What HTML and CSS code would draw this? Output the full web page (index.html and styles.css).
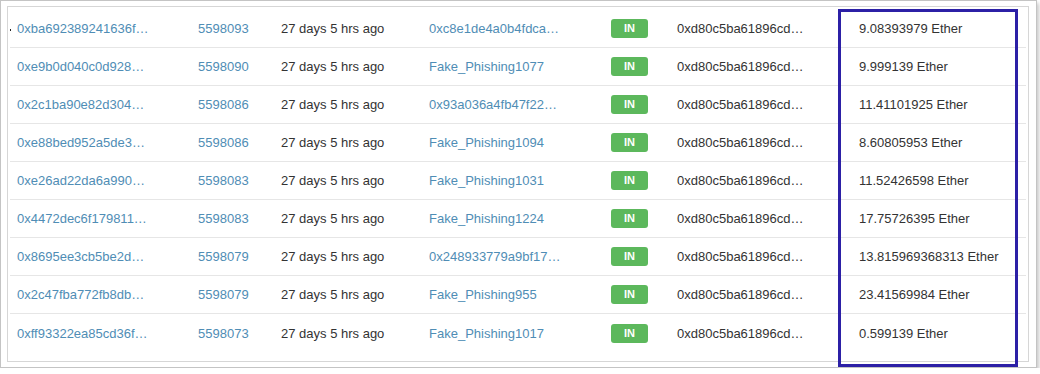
FILE: index.html
```html
<!DOCTYPE html>
<html>
<head>
<meta charset="utf-8">
<link rel="stylesheet" href="styles.css">
</head>
<body>
<div class="frame">
  <div class="panel">
    <div class="rows">
      <div class="row"><span class="link hash">0xba692389241636f…</span><span class="link">5598093</span><span>27 days 5 hrs ago</span><span class="link">0xc8e1de4a0b4fdca…</span><span><b class="badge">IN</b></span><span>0xd80c5ba61896cd…</span><span>9.08393979 Ether</span></div>
      <div class="row"><span class="link">0xe9b0d040c0d928…</span><span class="link">5598090</span><span>27 days 5 hrs ago</span><span class="link">Fake_Phishing1077</span><span><b class="badge">IN</b></span><span>0xd80c5ba61896cd…</span><span>9.999139 Ether</span></div>
      <div class="row"><span class="link">0x2c1ba90e82d304…</span><span class="link">5598086</span><span>27 days 5 hrs ago</span><span class="link">0x93a036a4fb47f22…</span><span><b class="badge">IN</b></span><span>0xd80c5ba61896cd…</span><span>11.41101925 Ether</span></div>
      <div class="row"><span class="link">0xe88bed952a5de3…</span><span class="link">5598086</span><span>27 days 5 hrs ago</span><span class="link">Fake_Phishing1094</span><span><b class="badge">IN</b></span><span>0xd80c5ba61896cd…</span><span>8.60805953 Ether</span></div>
      <div class="row"><span class="link">0xe26ad22da6a990…</span><span class="link">5598083</span><span>27 days 5 hrs ago</span><span class="link">Fake_Phishing1031</span><span><b class="badge">IN</b></span><span>0xd80c5ba61896cd…</span><span>11.52426598 Ether</span></div>
      <div class="row"><span class="link">0x4472dec6f179811…</span><span class="link">5598083</span><span>27 days 5 hrs ago</span><span class="link">Fake_Phishing1224</span><span><b class="badge">IN</b></span><span>0xd80c5ba61896cd…</span><span>17.75726395 Ether</span></div>
      <div class="row"><span class="link">0x8695ee3cb5be2d…</span><span class="link">5598079</span><span>27 days 5 hrs ago</span><span class="link">0x248933779a9bf17…</span><span><b class="badge">IN</b></span><span>0xd80c5ba61896cd…</span><span>13.815969368313 Ether</span></div>
      <div class="row"><span class="link">0x2c47fba772fb8db…</span><span class="link">5598079</span><span>27 days 5 hrs ago</span><span class="link">Fake_Phishing955</span><span><b class="badge">IN</b></span><span>0xd80c5ba61896cd…</span><span>23.41569984 Ether</span></div>
      <div class="row"><span class="link">0xff93322ea85cd36f…</span><span class="link">5598073</span><span>27 days 5 hrs ago</span><span class="link">Fake_Phishing1017</span><span><b class="badge">IN</b></span><span>0xd80c5ba61896cd…</span><span>0.599139 Ether</span></div>
    </div>
  </div>
  <div class="highlight"></div>
</div>
</body>
</html>
```
FILE: styles.css
```css
html, body {
  margin: 0;
  padding: 0;
  background: #ffffff;
}
body {
  font-family: "Liberation Sans", Arial, sans-serif;
  font-size: 13px;
  color: #333333;
}
.frame {
  position: relative;
  box-sizing: border-box;
  width: 1037px;
  height: 368px;
  border: 1px solid #c4c4c4;
  padding: 5px 8px 0 6px;
  box-shadow: 2px 3px 4px rgba(0, 0, 0, 0.22);
}
.panel {
  box-sizing: border-box;
  width: 1022px;
  height: 356px;
  border: 1px solid #d6d6d6;
  padding: 3px 2px 0 2px;
}
.rows {
  display: flex;
  flex-direction: column;
}
.row {
  display: grid;
  grid-template-columns: 181px 83px 148px 182px 66px 182px 1fr;
  height: 38px;
  box-sizing: border-box;
  border-bottom: 1px solid #e6e6e6;
  align-items: center;
}
.row:last-child {
  border-bottom: none;
}
.row > span {
  padding-left: 7px;
  white-space: nowrap;
  overflow: hidden;
}
.link {
  color: #4f8db5;
}
.hash {
  position: relative;
}
.hash::before {
  content: "";
  position: absolute;
  left: 0;
  top: 8px;
  width: 1px;
  height: 2px;
  background: #222;
}
.badge {
  display: inline-block;
  width: 37px;
  height: 19px;
  line-height: 19px;
  text-align: center;
  background: #5cb85c;
  color: #ffffff;
  font-weight: bold;
  font-size: 11px;
  border-radius: 3px;
}
.highlight {
  position: absolute;
  left: 837px;
  top: 8px;
  width: 174px;
  height: 352px;
  border: 3px solid #2c20a6;
}
```
